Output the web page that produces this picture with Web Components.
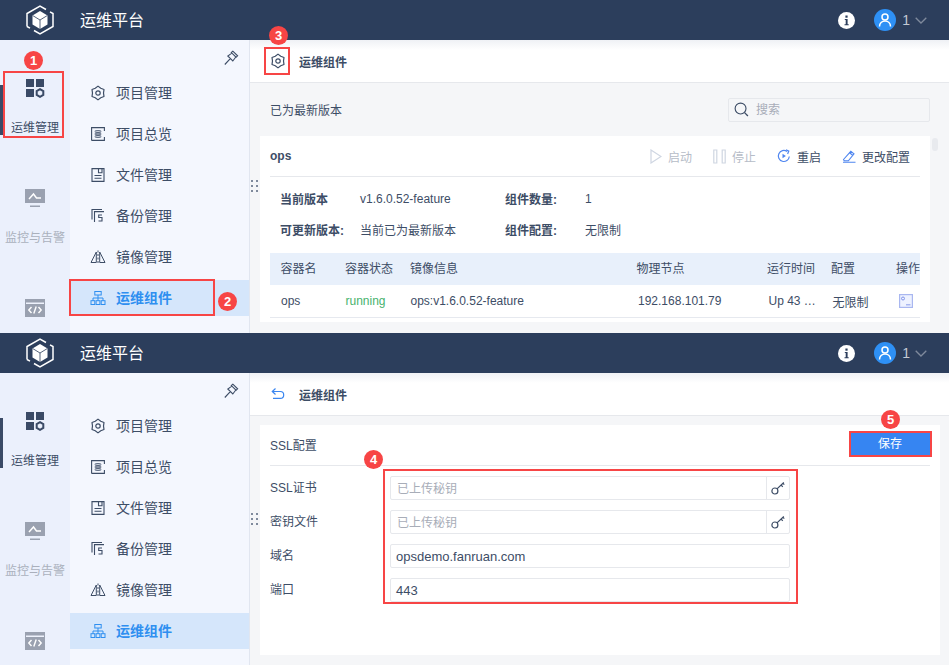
<!DOCTYPE html>
<html lang="zh">
<head>
<meta charset="utf-8">
<title>运维平台</title>
<style>
    html, body { margin: 0; padding: 0; }
    body {
        position: relative;
        width: 949px;
        height: 665px;
        overflow: hidden;
        font: 12px "Liberation Sans", "Noto Sans CJK SC", sans-serif;
        color: #3d4d66;
    }
</style>
</head>
<body>
<ops-panel style="height:333px">
    <ops-topbar icon="gear" title="运维组件"></ops-topbar>
    <ops-versions></ops-versions>
</ops-panel>
<ops-panel style="height:332px">
    <ops-topbar icon="back" title="运维组件"></ops-topbar>
    <ops-ssl></ops-ssl>
</ops-panel>

<anno-box x="3" y="71" w="61" h="67"></anno-box>
<anno-box x="69" y="279" w="146" h="37"></anno-box>
<anno-box x="264" y="47" w="26" h="28"></anno-box>
<anno-box x="383" y="469" w="415" h="135"></anno-box>
<anno-box x="849" y="431" w="83" h="26"></anno-box>
<anno-badge x="24" y="51">1</anno-badge>
<anno-badge x="218" y="292">2</anno-badge>
<anno-badge x="269" y="26">3</anno-badge>
<anno-badge x="364" y="450">4</anno-badge>
<anno-badge x="881" y="410">5</anno-badge>

<script>
const ICONS = {
    logo: `<svg width="28" height="30" viewBox="0 0 28 30"><path d="M1 21.500V8.500L14 1l6 3.500M24 6.800l3 1.700v13L14 29l-6-3.500M4 23.200l-3-1.700" fill="none" stroke="#fff" stroke-width="1.500"/><path d="M14 6l7.500 4.500v9L14 24l-7.500-4.500v-9z" fill="#fff"/><path d="M6.800 10.600 14 15l7.200-4.400M14 15v9" fill="none" stroke="#2c3e5c" stroke-width=".8"/></svg>`,
    info: `<svg width="17" height="17" viewBox="0 0 17 17"><circle cx="8.500" cy="8.500" r="8.500" fill="#fff"/><rect x="7.400" y="3.500" width="2.200" height="2.200" fill="#2c3e5c"/><path d="M6.800 7h2.800v5.200h1.100v1.100H6.500v-1.100h1.200V8.100H6.800z" fill="#2c3e5c"/></svg>`,
    user: `<svg width="22" height="22" viewBox="0 0 22 22"><circle cx="11" cy="11" r="11" fill="#2e90f5"/><circle cx="11" cy="8" r="3" fill="none" stroke="#fff" stroke-width="1.500"/><path d="M5.500 17.500c0-3.200 2.400-5.500 5.500-5.500s5.500 2.300 5.500 5.500" fill="none" stroke="#fff" stroke-width="1.500"/></svg>`,
    chevron: `<svg width="12" height="7" viewBox="0 0 12 7"><path d="M.7.7 6 6l5.300-5.300" fill="none" stroke="#7f8a9c" stroke-width="1.300"/></svg>`,
    manage: `<svg width="20" height="20" viewBox="0 0 20 20"><g fill="#3a4a66"><rect x="1" y="1" width="8" height="8"/><rect x="11" y="1" width="8" height="8"/><rect x="1" y="11" width="8" height="8"/></g><path d="M15 11.200l3.300 1.900v3.800L15 18.800l-3.300-1.900v-3.800z" fill="none" stroke="#3a4a66" stroke-width="2"/></svg>`,
    monitor: `<svg width="20" height="20" viewBox="0 0 20 20"><rect y="1" width="20" height="14" fill="#9aa1b0"/><path d="M4 11l4.500-5 3 4h4.500" fill="none" stroke="#fff" stroke-width="1.500"/><rect x="5" y="17.500" width="10" height="1.500" fill="#9aa1b0"/></svg>`,
    code: `<svg width="20" height="20" viewBox="0 0 20 20"><rect y="1" width="20" height="18" fill="#9aa1b0"/><rect x="1" y="4.500" width="18" height="1.500" fill="#eef2fc"/><path d="M6.500 9 3.800 12l2.700 3M13.500 9l2.700 3-2.700 3M11.200 8.500 8.800 15.500" fill="none" stroke="#fff" stroke-width="1.400"/></svg>`,
    pin: `<svg width="16" height="16" viewBox="0 0 16 16"><g fill="none" stroke="#3d4d66" stroke-width="1.100"><path d="M9.800 1.200l4.800 4.600-1.500 1.400-4.800-4.600zM8.800 3.100 4.800 6l5 5 3-4M7.300 8.700 1.800 14.500"/></g></svg>`,
    gear: `<svg width="16" height="16" viewBox="0 0 16 16"><g fill="none" stroke="currentColor" stroke-width="1.200" stroke-linejoin="round"><path d="M8 1.100 10.750 3.240 13.980 4.550 13.500 8 13.980 11.450 10.750 12.760 8 14.900 5.250 12.760 2.020 11.450 2.500 8 2.020 4.550 5.250 3.240z"/><circle cx="8" cy="8" r="2.200"/></g></svg>`,
    overview: `<svg width="16" height="16" viewBox="0 0 16 16"><g fill="none" stroke="currentColor"><path d="M1.600 14.400V1.600h12.800v3.400M14.400 11v3.400H1.600" stroke-width="1.100"/><ellipse cx="8" cy="5.500" rx="3.200" ry=".9" stroke-width=".9"/><ellipse cx="8" cy="8" rx="3.200" ry=".9" stroke-width=".9"/><ellipse cx="8" cy="10.500" rx="3.200" ry=".9" stroke-width=".9"/></g></svg>`,
    file: `<svg width="16" height="16" viewBox="0 0 16 16"><g fill="none" stroke="currentColor" stroke-width="1.100"><path d="M2 1.600h12v12.800H2z"/><path d="M8.500 1.800v4h3.500v-4M4.500 8.500h7M4.500 11.300h7"/></g></svg>`,
    backup: `<svg width="16" height="16" viewBox="0 0 16 16"><g fill="none" stroke="currentColor" stroke-width="1.100"><path d="M4.500 14V3.600H14M2 11.500V1.500h10"/><path d="M12 7H8.700v2.500H12V13H8.500"/></g></svg>`,
    mirror: `<svg width="16" height="16" viewBox="0 0 16 16"><g fill="none" stroke="currentColor" stroke-width="1"><path d="M6.300 3 1 13.500h5.300zM9.700 3 15 13.500H9.700z"/><path d="M8 1.500v13" stroke-dasharray="2 1.500"/></g></svg>`,
    component: `<svg width="16" height="16" viewBox="0 0 16 16"><g fill="none" stroke="currentColor" stroke-width="1"><rect x="4.800" y="1.500" width="6.400" height="3.500"/><rect x="1" y="10.700" width="3.800" height="3.800"/><rect x="6.100" y="10.700" width="3.800" height="3.800"/><rect x="11.200" y="10.700" width="3.800" height="3.800"/><path d="M8 5v5.700M3 10.700V8h10v2.700"/></g></svg>`,
    back: `<svg width="14" height="14" viewBox="0 0 14 14"><path d="M4.500 1.500 1.300 4.500l3.200 3M1.300 4.500h8a3.300 3.300 0 0 1 0 6.800H2" fill="none" stroke="#3a86f0" stroke-width="1.200"/></svg>`,
    search: `<svg width="15" height="15" viewBox="0 0 16 16"><circle cx="7" cy="7" r="5.800" fill="none" stroke="#3d4d66" stroke-width="1.200"/><path d="M11.300 11.300 14.800 15" stroke="#3d4d66" stroke-width="1.400"/></svg>`,
    play: `<svg width="12" height="15" viewBox="0 0 12 15"><path d="M1 1v13l10-6.500z" fill="none" stroke="#cfd6e2" stroke-width="1.200"/></svg>`,
    pause: `<svg width="13" height="15" viewBox="0 0 13 15"><path d="M.8 1h3v13h-3zM9.200 1h3v13h-3z" fill="none" stroke="#cfd6e2" stroke-width="1.200"/></svg>`,
    restart: `<svg width="14" height="14" viewBox="0 0 14 14"><path d="M12.300 7.500A5.500 5.500 0 1 1 10 2.500" fill="none" stroke="#4f86f0" stroke-width="1.200"/><path d="M9 .7l2.800 1.400-1.200 2.900" fill="none" stroke="#4f86f0" stroke-width="1.200"/><path d="M5.500 4.800v4.400l3.400-2.200z" fill="#4f86f0"/></svg>`,
    edit: `<svg width="14" height="14" viewBox="0 0 14 14"><path d="M1 13.300h12.500M1.500 10.500 8.800 2.300 12 4.800l-5.600 7H2.200z" fill="none" stroke="#4f86f0" stroke-width="1.100"/><path d="M7.500 3.800l3.200 2.500" stroke="#4f86f0" stroke-width="1.100"/></svg>`,
    op: `<svg width="14" height="14" viewBox="0 0 14 14"><rect x=".6" y=".6" width="12.800" height="12.800" fill="#eef2ff" stroke="#a9b7f0" stroke-width="1.200"/><circle cx="4" cy="4.500" r="1.500" fill="none" stroke="#7f93ea"/><rect x="7" y="10" width="4.500" height="1.500" fill="#a9b7f0"/></svg>`,
    key: `<svg width="14" height="14" viewBox="0 0 14 14"><circle cx="3.900" cy="10" r="3" fill="none" stroke="#3d4d66" stroke-width="1.200"/><path d="M6 7.900 12.800 1.500M10 4.100l1.800 1.700M12 2.300l1.300 1.300" fill="none" stroke="#3d4d66" stroke-width="1.200"/></svg>`,
};

class OpsHeader extends HTMLElement {
    constructor() {
        super();
        this.attachShadow({ mode: 'open' });
        this.shadowRoot.innerHTML = `
            <style>
                :host {
                    display: flex;
                    align-items: center;
                    height: 40px;
                    background-color: #2c3e5c;
                    color: #fff;
                    position: relative;
                    z-index: 2;
                }
                .logo { width: 80px; padding-left: 26px; box-sizing: border-box; display: flex; }
                .title { flex: 1; font-size: 16px; padding-bottom: 2px; }
                .info { display: flex; margin-right: 19px; }
                .user { display: flex; align-items: center; margin-right: 22px; color: #c3c9d3; font-size: 14px; }
                .user .num { margin: 0 5px 0 6px; }
                .user svg { display: block; }
            </style>
            <div class="logo">${ICONS.logo}</div>
            <div class="title">运维平台</div>
            <div class="info">${ICONS.info}</div>
            <div class="user">${ICONS.user}<span class="num">1</span>${ICONS.chevron}</div>
        `;
    }
}
customElements.define('ops-header', OpsHeader);

class OpsRail extends HTMLElement {
    constructor() {
        super();
        this.attachShadow({ mode: 'open' });
        const items = [
            ['manage', '运维管理', true],
            ['monitor', '监控与告警', false],
            ['code', '', false],
        ];
        this.shadowRoot.innerHTML = `
            <style>
                :host {
                    display: flex;
                    flex-direction: column;
                    width: 70px;
                    padding-top: 38px;
                    box-sizing: border-box;
                    background-color: #ebf0fc;
                    overflow: hidden;
                    flex: none;
                }
                .item {
                    position: relative;
                    display: flex;
                    flex-direction: column;
                    align-items: center;
                    height: 110px;
                    flex: none;
                    color: #aab0bc;
                }
                .item svg { display: block; }
                .item.active { color: #3d4d66; }
                .item.active::before {
                    content: '';
                    position: absolute;
                    left: 0;
                    top: 7px;
                    width: 3px;
                    height: 50px;
                    background-color: #3a4a66;
                }
                .label { margin-top: 22px; height: 16px; line-height: 16px; white-space: nowrap; }
            </style>
            ${items.map(([icon, label, active]) => `
                <div class="item ${active ? 'active' : ''}">
                    ${ICONS[icon]}
                    <div class="label">${label}</div>
                </div>`).join('')}
        `;
    }
}
customElements.define('ops-rail', OpsRail);

class OpsSide extends HTMLElement {
    constructor() {
        super();
        this.attachShadow({ mode: 'open' });
        const items = [
            ['gear', '项目管理'],
            ['overview', '项目总览'],
            ['file', '文件管理'],
            ['backup', '备份管理'],
            ['mirror', '镜像管理'],
            ['component', '运维组件'],
        ];
        this.shadowRoot.innerHTML = `
            <style>
                :host {
                    display: block;
                    width: 180px;
                    box-sizing: border-box;
                    background-color: #f4f7fe;
                    border-right: 1px solid #e1e6f0;
                    flex: none;
                    overflow: hidden;
                }
                .pin { display: flex; justify-content: flex-end; height: 35px; padding: 10px 10px 0 0; box-sizing: border-box; }
                .item {
                    display: flex;
                    align-items: center;
                    gap: 10px;
                    height: 36px;
                    margin-bottom: 5px;
                    padding-left: 20px;
                    font-size: 14px;
                    color: #3d4d66;
                }
                .item svg { display: block; }
                .item span { padding-bottom: 2px; }
                .item.active { background-color: #d5e6fb; color: #2f8ff0; font-weight: bold; }
            </style>
            <div class="pin">${ICONS.pin}</div>
            ${items.map(([icon, label], i) => `
                <div class="item ${i === 5 ? 'active' : ''}">${ICONS[icon]}<span>${label}</span></div>`).join('')}
        `;
    }
}
customElements.define('ops-side', OpsSide);

class OpsPanel extends HTMLElement {
    constructor() {
        super();
        this.attachShadow({ mode: 'open' });
        this.shadowRoot.innerHTML = `
            <style>
                :host { display: flex; flex-direction: column; overflow: hidden; }
                .body { flex: 1; min-height: 0; display: flex; }
                main {
                    position: relative;
                    flex: 1;
                    min-width: 0;
                    display: flex;
                    flex-direction: column;
                    background-color: #f5f6f8;
                }
                .drag {
                    position: absolute;
                    left: 0;
                    top: 140px;
                    width: 9px;
                    display: grid;
                    grid-template-columns: 2px 2px;
                    justify-content: space-between;
                    gap: 3px 3px;
                    padding: 0 1px;
                    box-sizing: border-box;
                    z-index: 1;
                }
                .drag i { display: block; width: 2px; height: 2px; background-color: #7f8a9c; }
                .shade {
                    position: absolute;
                    left: 0;
                    right: 0;
                    top: 0;
                    height: 10px;
                    background: linear-gradient(#eff1f5, rgba(255, 255, 255, 0));
                }
            </style>
            <ops-header></ops-header>
            <div class="body">
                <ops-rail></ops-rail>
                <ops-side></ops-side>
                <main>
                    <slot></slot>
                    <div class="shade"></div>
                    <div class="drag"><i></i><i></i><i></i><i></i><i></i><i></i></div>
                </main>
            </div>
        `;
    }
}
customElements.define('ops-panel', OpsPanel);

class OpsTopbar extends HTMLElement {
    constructor() {
        super();
        this.attachShadow({ mode: 'open' });
        this.shadowRoot.innerHTML = `
            <style>
                :host {
                    display: flex;
                    align-items: center;
                    height: 43px;
                    box-sizing: border-box;
                    border-bottom: 1px solid #e6e8ec;
                    background-color: #fff;
                    padding-left: 20px;
                    flex: none;
                    font-weight: bold;
                    color: #3d4d66;
                }
                .icon { width: 16px; display: flex; justify-content: center; margin-right: 13px; }
            </style>
            <div class="icon">${ICONS[this.getAttribute('icon')]}</div>
            <div>${this.getAttribute('title')}</div>
        `;
    }
}
customElements.define('ops-topbar', OpsTopbar);

class OpsVersions extends HTMLElement {
    constructor() {
        super();
        this.attachShadow({ mode: 'open' });
        const cols = ['容器名', '容器状态', '镜像信息', '物理节点', '运行时间', '配置', '操作'];
        this.shadowRoot.innerHTML = `
            <style>
                :host { display: block; padding: 0 10px; position: relative; }
                .bar { display: flex; align-items: center; justify-content: space-between; height: 53px; padding-left: 10px; margin-right: 9px; box-sizing: border-box; }
                .search {
                    display: flex;
                    align-items: center;
                    gap: 7px;
                    width: 202px;
                    height: 24px;
                    padding-left: 5px;
                    box-sizing: border-box;
                    border: 1px solid #e6e8ec;
                    border-radius: 2px;
                    color: #a8adb8;
                }
                .search svg { display: block; }
                .search span { padding-bottom: 2px; }
                .card { background-color: #fff; padding: 0 10px; margin-right: 9px; height: 186px; box-sizing: border-box; }
                .head {
                    display: flex;
                    align-items: center;
                    height: 41px;
                    box-sizing: border-box;
                    border-bottom: 1px solid #e6e8ec;
                    font-weight: bold;
                }
                .head .name { flex: 1; }
                .action { display: flex; align-items: center; gap: 6px; margin-right: 21px; color: #3d4d66; }
                .action:last-child { margin-right: 10px; }
                .action.off { color: #b6bcc7; }
                .head .action { font-weight: normal; }
                .action svg { display: block; }
                .meta {
                    display: grid;
                    grid-template-columns: 80px 145px 80px 1fr;
                    grid-auto-rows: 31px;
                    align-items: center;
                    padding: 6px 0 0 10px;
                    height: 76px;
                    box-sizing: border-box;
                }
                .meta b { color: #3d4d66; }
                .row {
                    display: grid;
                    grid-template-columns: 64.5px 65px 226.5px 130.500px 64px 65px 34.500px;
                    align-items: center;
                    height: 32px;
                    box-sizing: border-box;
                }
                .row > * { padding-left: 10.500px; white-space: nowrap; overflow: hidden; }
                .row.th { background-color: #e8f0fb; padding-bottom: 3px; }
                .row.td { height: 33px; border-bottom: 1px solid #e6e9ef; }
                .row.td > * { padding-left: 11px; }
                .row.td > .ip, .row.td > .up { padding-left: 12px; }
                .row.td > .lim { padding-left: 12px; }
                .run { color: #47b26d; }
                .op { display: flex; padding-left: 13px !important; }
                .thumb {
                    position: absolute;
                    right: 11px;
                    top: 55px;
                    width: 6px;
                    height: 13px;
                    border-radius: 3px;
                    background-color: #e8eaee;
                }
            </style>
            <div class="bar">
                <div>已为最新版本</div>
                <div class="search">${ICONS.search}<span>搜索</span></div>
            </div>
            <div class="card">
                <div class="head">
                    <div class="name">ops</div>
                    <div class="action off">${ICONS.play}<span>启动</span></div>
                    <div class="action off">${ICONS.pause}<span>停止</span></div>
                    <div class="action">${ICONS.restart}<span>重启</span></div>
                    <div class="action">${ICONS.edit}<span>更改配置</span></div>
                </div>
                <div class="meta">
                    <b>当前版本</b><span>v1.6.0.52-feature</span><b>组件数量:</b><span>1</span>
                    <b>可更新版本:</b><span>当前已为最新版本</span><b>组件配置:</b><span>无限制</span>
                </div>
                <div class="row th">${cols.map(c => `<div>${c}</div>`).join('')}</div>
                <div class="row td">
                    <div>ops</div>
                    <div class="run">running</div>
                    <div>ops:v1.6.0.52-feature</div>
                    <div class="ip">192.168.101.79</div>
                    <div class="up">Up 43 …</div>
                    <div class="lim">无限制</div>
                    <div class="op">${ICONS.op}</div>
                </div>
            </div>
            <div class="thumb"></div>
        `;
    }
}
customElements.define('ops-versions', OpsVersions);

class OpsField extends HTMLElement {
    constructor() {
        super();
        this.attachShadow({ mode: 'open' });
        const hasKey = this.hasAttribute('key');
        const placeholder = this.getAttribute('placeholder');
        this.shadowRoot.innerHTML = `
            <style>
                :host { display: grid; grid-template-columns: 120px 400px; align-items: center; height: 24px; }
                .label { padding-bottom: 3px; }
                .box {
                    display: flex;
                    align-items: center;
                    height: 24px;
                    box-sizing: border-box;
                    border: 1px solid #e6e8ec;
                    border-radius: 2px;
                    font-size: 13px;
                }
                .text { flex: 1; padding-left: 5px; }
                .text.ph { color: #a8adb8; font-size: 12px; padding: 0 0 2px 6px; }
                .key {
                    width: 23px;
                    height: 100%;
                    box-sizing: border-box;
                    display: flex;
                    align-items: center;
                    justify-content: center;
                    border-left: 1px solid #e6e8ec;
                }
                .key svg { display: block; }
            </style>
            <div class="label">${this.getAttribute('label')}</div>
            <div class="box">
                <div class="text ${placeholder ? 'ph' : ''}">${placeholder || this.getAttribute('value')}</div>
                ${hasKey ? `<div class="key">${ICONS.key}</div>` : ''}
            </div>
        `;
    }
}
customElements.define('ops-field', OpsField);

class OpsSsl extends HTMLElement {
    constructor() {
        super();
        this.attachShadow({ mode: 'open' });
        this.shadowRoot.innerHTML = `
            <style>
                :host { display: block; padding: 9px 9px 10px 10px; flex: 1; min-height: 0; box-sizing: border-box; }
                .card { background-color: #fff; height: 230px; padding: 0 10px; box-sizing: border-box; }
                .head {
                    display: flex;
                    align-items: center;
                    justify-content: space-between;
                    height: 41px;
                    padding-bottom: 2px;
                    box-sizing: border-box;
                    border-bottom: 1px solid #e6e8ec;
                }
                .save {
                    width: 80px;
                    height: 24px;
                    line-height: 24px;
                    text-align: center;
                    color: #fff;
                    background-color: #3685f2;
                }
                .form { display: flex; flex-direction: column; gap: 10px; padding-top: 10px; }
            </style>
            <div class="card">
                <div class="head"><div>SSL配置</div><div class="save">保存</div></div>
                <div class="form">
                    <ops-field label="SSL证书" placeholder="已上传秘钥" key></ops-field>
                    <ops-field label="密钥文件" placeholder="已上传秘钥" key></ops-field>
                    <ops-field label="域名" value="opsdemo.fanruan.com"></ops-field>
                    <ops-field label="端口" value="443"></ops-field>
                </div>
            </div>
        `;
    }
}
customElements.define('ops-ssl', OpsSsl);

class AnnoBox extends HTMLElement {
    constructor() {
        super();
        this.attachShadow({ mode: 'open' });
        const get = (name) => this.getAttribute(name);
        this.shadowRoot.innerHTML = `
            <style>
                :host {
                    position: absolute;
                    left: ${get('x')}px;
                    top: ${get('y')}px;
                    width: ${get('w')}px;
                    height: ${get('h')}px;
                    box-sizing: border-box;
                    border: 2px solid #f74545;
                    z-index: 5;
                }
            </style>
        `;
    }
}
customElements.define('anno-box', AnnoBox);

class AnnoBadge extends HTMLElement {
    constructor() {
        super();
        this.attachShadow({ mode: 'open' });
        this.shadowRoot.innerHTML = `
            <style>
                :host {
                    position: absolute;
                    left: ${this.getAttribute('x')}px;
                    top: ${this.getAttribute('y')}px;
                    width: 19px;
                    height: 19px;
                    border-radius: 50%;
                    background-color: #f74545;
                    color: #fff;
                    font: bold 13px/19px "Liberation Sans", sans-serif;
                    text-align: center;
                    z-index: 6;
                }
            </style>
            <slot></slot>
        `;
    }
}
customElements.define('anno-badge', AnnoBadge);
</script>
</body>
</html>
